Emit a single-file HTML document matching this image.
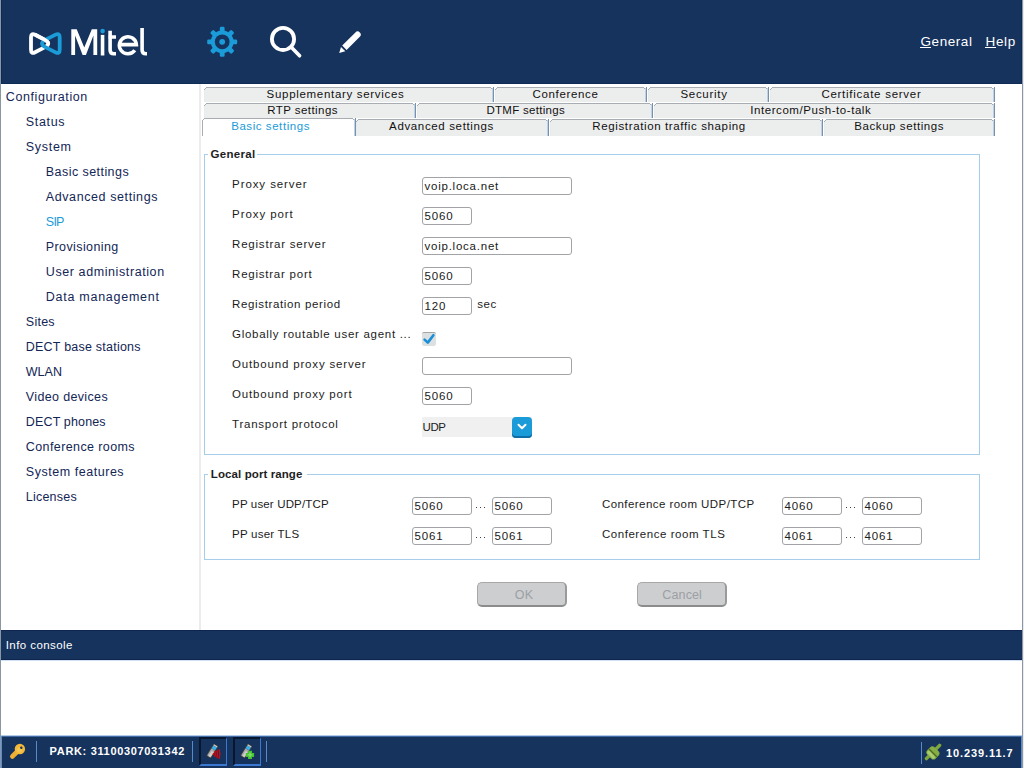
<!DOCTYPE html>
<html><head><meta charset="utf-8"><title>OMM</title>
<style>
html,body{margin:0;padding:0;}
body{width:1024px;height:768px;position:relative;overflow:hidden;background:#ffffff;font-family:"Liberation Sans",sans-serif;}
.r{position:absolute;}
.t{position:absolute;white-space:nowrap;line-height:normal;}
</style></head><body>
<div class="r" style="left:0px;top:0px;width:1px;height:768px;background:#8a96a2"></div>
<div class="r" style="left:1px;top:0px;width:1021px;height:84px;background:#16335d"></div>
<div class="r" style="left:1px;top:83px;width:1021px;height:1px;background:#0f2a55"></div>
<div class="r" style="left:1px;top:0px;width:1px;height:84px;background:#0c2a58"></div>
<div class="r" style="left:1021px;top:0px;width:1px;height:84px;background:#0c2a58"></div>
<div class="r" style="left:1022px;top:0px;width:1px;height:768px;background:#8a96a2"></div>
<div class="r" style="left:1023px;top:0px;width:1px;height:768px;background:#e8ecf0"></div>
<div class="r" style="left:199px;top:84px;width:2px;height:546px;background:#ececec"></div>
<svg class="r" style="left:0;top:0" width="400" height="84" viewBox="0 0 400 84">
<g fill="none" stroke-width="3.8" stroke-linejoin="round">
<path d="M31.00,37.20 Q31.00,32.60 35.08,34.72 L44.46,39.58 Q52.00,43.50 44.46,47.42 L35.08,52.28 Q31.00,54.40 31.00,49.80 Z" stroke="#ffffff"/>
<path d="M55.60,34.68 Q59.70,32.60 59.70,37.20 L59.70,49.80 Q59.70,54.40 55.60,52.32 L45.78,47.34 Q38.20,43.50 45.78,39.66 Z" stroke="#1b9bd8"/>
<clipPath id="wc"><rect x="36" y="30" width="16" height="12.4"/></clipPath>
<path d="M31.00,37.20 Q31.00,32.60 35.08,34.72 L44.46,39.58 Q52.00,43.50 44.46,47.42 L35.08,52.28 Q31.00,54.40 31.00,49.80 Z" stroke="#ffffff" clip-path="url(#wc)"/>
</g>
<path fill="#ffffff" d="M71.3,55.1 L71.3,29.3 L76.7,29.3 L84.25,47.6 L91.8,29.3 L97.2,29.3 L97.2,55.1 L93.4,55.1 L93.4,35.4 L85.9,55.1 L82.6,55.1 L75.1,35.4 L75.1,55.1 Z"/>
<g fill="none" stroke="#ffffff" stroke-width="3.6">
<path d="M102.55,34.9 L102.55,55.5"/>
<path d="M110.1,30.8 L110.1,50 Q110.1,53.7 113.8,53.7 L116,53.7 M108.2,37.05 L116,37.05"/>
<path d="M119.35,44.65 L136.35,44.65 A8.5,8.5 0 1 0 134.8,50.2"/>
<path d="M142.1,28 L142.1,50 Q142.1,53.8 145.9,53.8 L147,53.8"/>
</g>
<circle cx="102.6" cy="31.1" r="2.3" fill="#1b9bd8"/>
<!-- gear -->
<g transform="translate(222.2,41.8)" fill="#1b9bd8">
<circle r="11.4"/>
<rect x="-2.4" y="-15" width="4.8" height="6" rx="1.3" transform="rotate(0)"/><rect x="-2.4" y="-15" width="4.8" height="6" rx="1.3" transform="rotate(45)"/><rect x="-2.4" y="-15" width="4.8" height="6" rx="1.3" transform="rotate(90)"/><rect x="-2.4" y="-15" width="4.8" height="6" rx="1.3" transform="rotate(135)"/><rect x="-2.4" y="-15" width="4.8" height="6" rx="1.3" transform="rotate(180)"/><rect x="-2.4" y="-15" width="4.8" height="6" rx="1.3" transform="rotate(225)"/><rect x="-2.4" y="-15" width="4.8" height="6" rx="1.3" transform="rotate(270)"/><rect x="-2.4" y="-15" width="4.8" height="6" rx="1.3" transform="rotate(315)"/>
<circle r="7.4" fill="#16335d"/>
<circle r="2.9"/>
</g>
<!-- search -->
<circle cx="283" cy="38.9" r="11.1" fill="none" stroke="#fff" stroke-width="3.8"/>
<path d="M291.6,47.6 L299.6,55.8" stroke="#fff" stroke-width="3.6" stroke-linecap="round"/>
<!-- pencil -->
<path d="M342.2,45.6 L355.4,32.4 Q357.6,30.2 359.8,32.4 Q362,34.6 359.8,36.8 L346.6,50 Z" fill="#fff"/>
<path d="M341.0,46.9 L345.3,51.2 L339.2,53 Z" fill="#fff"/>
</svg>
<div class="t" style="left:920.50px;top:34px;font-size:13.5px;letter-spacing:0.565px;color:#ffffff;">General</div>
<div class="r" style="left:920px;top:47px;width:11px;height:1px;background:#ffffff"></div>
<div class="t" style="left:985.50px;top:34px;font-size:13.5px;letter-spacing:0.667px;color:#ffffff;">Help</div>
<div class="r" style="left:985px;top:47px;width:11px;height:1px;background:#ffffff"></div>
<div class="t" style="left:5.80px;top:90px;font-size:12.5px;letter-spacing:0.595px;color:#132656;">Configuration</div>
<div class="t" style="left:25.80px;top:115px;font-size:12.5px;letter-spacing:0.650px;color:#132656;">Status</div>
<div class="t" style="left:25.80px;top:140px;font-size:12.5px;letter-spacing:0.713px;color:#132656;">System</div>
<div class="t" style="left:45.80px;top:165px;font-size:12.5px;letter-spacing:0.442px;color:#132656;">Basic settings</div>
<div class="t" style="left:45.80px;top:190px;font-size:12.5px;letter-spacing:0.594px;color:#132656;">Advanced settings</div>
<div class="t" style="left:45.80px;top:215px;font-size:12.5px;letter-spacing:-0.742px;color:#1b9bd8;">SIP</div>
<div class="t" style="left:45.80px;top:240px;font-size:12.5px;letter-spacing:0.398px;color:#132656;">Provisioning</div>
<div class="t" style="left:45.80px;top:265px;font-size:12.5px;letter-spacing:0.591px;color:#132656;">User administration</div>
<div class="t" style="left:45.80px;top:290px;font-size:12.5px;letter-spacing:0.735px;color:#132656;">Data management</div>
<div class="t" style="left:25.80px;top:315px;font-size:12.5px;letter-spacing:0.250px;color:#132656;">Sites</div>
<div class="t" style="left:25.80px;top:340px;font-size:12.5px;letter-spacing:0.221px;color:#132656;">DECT base stations</div>
<div class="t" style="left:25.80px;top:365px;font-size:12.5px;letter-spacing:0.005px;color:#132656;">WLAN</div>
<div class="t" style="left:25.80px;top:390px;font-size:12.5px;letter-spacing:0.354px;color:#132656;">Video devices</div>
<div class="t" style="left:25.80px;top:415px;font-size:12.5px;letter-spacing:0.150px;color:#132656;">DECT phones</div>
<div class="t" style="left:25.80px;top:440px;font-size:12.5px;letter-spacing:0.400px;color:#132656;">Conference rooms</div>
<div class="t" style="left:25.80px;top:465px;font-size:12.5px;letter-spacing:0.536px;color:#132656;">System features</div>
<div class="t" style="left:25.80px;top:490px;font-size:12.5px;letter-spacing:0.214px;color:#132656;">Licenses</div>
<div class="r" style="left:205px;top:88px;width:287px;height:14px;background:#eceded"></div>
<div class="r" style="left:204px;top:90px;width:1px;height:12px;background:#e6ebee"></div>
<div class="r" style="left:206px;top:87px;width:285px;height:1px;background:#a7adb3"></div>
<div class="r" style="left:205px;top:88px;width:1px;height:1px;background:#a7adb3"></div>
<div class="r" style="left:204px;top:89px;width:1px;height:1px;background:#a7adb3"></div>
<div class="r" style="left:491px;top:88px;width:1px;height:1px;background:#a7adb3"></div>
<div class="r" style="left:493px;top:87px;width:1px;height:15px;background:#7a90a8"></div>
<div class="r" style="left:492px;top:88px;width:1px;height:14px;background:#bcd2ea"></div>
<div class="r" style="left:496px;top:88px;width:149px;height:14px;background:#eceded"></div>
<div class="r" style="left:495px;top:90px;width:1px;height:12px;background:#e6ebee"></div>
<div class="r" style="left:497px;top:87px;width:147px;height:1px;background:#a7adb3"></div>
<div class="r" style="left:496px;top:88px;width:1px;height:1px;background:#a7adb3"></div>
<div class="r" style="left:495px;top:89px;width:1px;height:1px;background:#a7adb3"></div>
<div class="r" style="left:644px;top:88px;width:1px;height:1px;background:#a7adb3"></div>
<div class="r" style="left:646px;top:87px;width:1px;height:15px;background:#7a90a8"></div>
<div class="r" style="left:645px;top:88px;width:1px;height:14px;background:#bcd2ea"></div>
<div class="r" style="left:649px;top:88px;width:118px;height:14px;background:#eceded"></div>
<div class="r" style="left:648px;top:90px;width:1px;height:12px;background:#e6ebee"></div>
<div class="r" style="left:650px;top:87px;width:116px;height:1px;background:#a7adb3"></div>
<div class="r" style="left:649px;top:88px;width:1px;height:1px;background:#a7adb3"></div>
<div class="r" style="left:648px;top:89px;width:1px;height:1px;background:#a7adb3"></div>
<div class="r" style="left:766px;top:88px;width:1px;height:1px;background:#a7adb3"></div>
<div class="r" style="left:768px;top:87px;width:1px;height:15px;background:#7a90a8"></div>
<div class="r" style="left:767px;top:88px;width:1px;height:14px;background:#bcd2ea"></div>
<div class="r" style="left:771px;top:88px;width:222px;height:14px;background:#eceded"></div>
<div class="r" style="left:770px;top:90px;width:1px;height:12px;background:#e6ebee"></div>
<div class="r" style="left:772px;top:87px;width:220px;height:1px;background:#a7adb3"></div>
<div class="r" style="left:771px;top:88px;width:1px;height:1px;background:#a7adb3"></div>
<div class="r" style="left:770px;top:89px;width:1px;height:1px;background:#a7adb3"></div>
<div class="r" style="left:992px;top:88px;width:1px;height:1px;background:#a7adb3"></div>
<div class="r" style="left:994px;top:87px;width:1px;height:15px;background:#7a90a8"></div>
<div class="r" style="left:993px;top:88px;width:1px;height:14px;background:#bcd2ea"></div>
<div class="r" style="left:205px;top:104px;width:209px;height:14px;background:#eceded"></div>
<div class="r" style="left:204px;top:106px;width:1px;height:12px;background:#e6ebee"></div>
<div class="r" style="left:206px;top:103px;width:207px;height:1px;background:#a7adb3"></div>
<div class="r" style="left:205px;top:104px;width:1px;height:1px;background:#a7adb3"></div>
<div class="r" style="left:204px;top:105px;width:1px;height:1px;background:#a7adb3"></div>
<div class="r" style="left:413px;top:104px;width:1px;height:1px;background:#a7adb3"></div>
<div class="r" style="left:415px;top:103px;width:1px;height:15px;background:#7a90a8"></div>
<div class="r" style="left:414px;top:104px;width:1px;height:14px;background:#bcd2ea"></div>
<div class="r" style="left:418px;top:104px;width:233px;height:14px;background:#eceded"></div>
<div class="r" style="left:417px;top:106px;width:1px;height:12px;background:#e6ebee"></div>
<div class="r" style="left:419px;top:103px;width:231px;height:1px;background:#a7adb3"></div>
<div class="r" style="left:418px;top:104px;width:1px;height:1px;background:#a7adb3"></div>
<div class="r" style="left:417px;top:105px;width:1px;height:1px;background:#a7adb3"></div>
<div class="r" style="left:650px;top:104px;width:1px;height:1px;background:#a7adb3"></div>
<div class="r" style="left:652px;top:103px;width:1px;height:15px;background:#7a90a8"></div>
<div class="r" style="left:651px;top:104px;width:1px;height:14px;background:#bcd2ea"></div>
<div class="r" style="left:655px;top:104px;width:338px;height:14px;background:#eceded"></div>
<div class="r" style="left:654px;top:106px;width:1px;height:12px;background:#e6ebee"></div>
<div class="r" style="left:656px;top:103px;width:336px;height:1px;background:#a7adb3"></div>
<div class="r" style="left:655px;top:104px;width:1px;height:1px;background:#a7adb3"></div>
<div class="r" style="left:654px;top:105px;width:1px;height:1px;background:#a7adb3"></div>
<div class="r" style="left:992px;top:104px;width:1px;height:1px;background:#a7adb3"></div>
<div class="r" style="left:994px;top:103px;width:1px;height:15px;background:#7a90a8"></div>
<div class="r" style="left:993px;top:104px;width:1px;height:14px;background:#bcd2ea"></div>
<div class="r" style="left:357px;top:120px;width:190px;height:16px;background:#eceded"></div>
<div class="r" style="left:356px;top:122px;width:1px;height:14px;background:#e6ebee"></div>
<div class="r" style="left:358px;top:119px;width:188px;height:1px;background:#a7adb3"></div>
<div class="r" style="left:357px;top:120px;width:1px;height:1px;background:#a7adb3"></div>
<div class="r" style="left:356px;top:121px;width:1px;height:1px;background:#a7adb3"></div>
<div class="r" style="left:546px;top:120px;width:1px;height:1px;background:#a7adb3"></div>
<div class="r" style="left:548px;top:119px;width:1px;height:17px;background:#7a90a8"></div>
<div class="r" style="left:547px;top:120px;width:1px;height:16px;background:#bcd2ea"></div>
<div class="r" style="left:551px;top:120px;width:270px;height:16px;background:#eceded"></div>
<div class="r" style="left:550px;top:122px;width:1px;height:14px;background:#e6ebee"></div>
<div class="r" style="left:552px;top:119px;width:268px;height:1px;background:#a7adb3"></div>
<div class="r" style="left:551px;top:120px;width:1px;height:1px;background:#a7adb3"></div>
<div class="r" style="left:550px;top:121px;width:1px;height:1px;background:#a7adb3"></div>
<div class="r" style="left:820px;top:120px;width:1px;height:1px;background:#a7adb3"></div>
<div class="r" style="left:822px;top:119px;width:1px;height:17px;background:#7a90a8"></div>
<div class="r" style="left:821px;top:120px;width:1px;height:16px;background:#bcd2ea"></div>
<div class="r" style="left:825px;top:120px;width:168px;height:16px;background:#eceded"></div>
<div class="r" style="left:824px;top:122px;width:1px;height:14px;background:#e6ebee"></div>
<div class="r" style="left:826px;top:119px;width:166px;height:1px;background:#a7adb3"></div>
<div class="r" style="left:825px;top:120px;width:1px;height:1px;background:#a7adb3"></div>
<div class="r" style="left:824px;top:121px;width:1px;height:1px;background:#a7adb3"></div>
<div class="r" style="left:992px;top:120px;width:1px;height:1px;background:#a7adb3"></div>
<div class="r" style="left:994px;top:119px;width:1px;height:17px;background:#7a90a8"></div>
<div class="r" style="left:993px;top:120px;width:1px;height:16px;background:#bcd2ea"></div>
<div class="r" style="left:203px;top:119px;width:151px;height:17px;background:#ffffff"></div>
<div class="r" style="left:202px;top:121px;width:1px;height:15px;background:#a7adb3"></div>
<div class="r" style="left:204px;top:118px;width:149px;height:1px;background:#a7adb3"></div>
<div class="r" style="left:203px;top:119px;width:1px;height:1px;background:#a7adb3"></div>
<div class="r" style="left:202px;top:120px;width:1px;height:1px;background:#a7adb3"></div>
<div class="r" style="left:353px;top:119px;width:1px;height:1px;background:#a7adb3"></div>
<div class="r" style="left:355px;top:118px;width:1px;height:18px;background:#7a90a8"></div>
<div class="r" style="left:354px;top:119px;width:1px;height:17px;background:#bcd2ea"></div>
<div class="t" style="left:266.60px;top:88px;font-size:11.5px;letter-spacing:0.691px;color:#111111;">Supplementary services</div>
<div class="t" style="left:532.60px;top:88px;font-size:11.5px;letter-spacing:0.637px;color:#111111;">Conference</div>
<div class="t" style="left:680.40px;top:88px;font-size:11.5px;letter-spacing:0.712px;color:#111111;">Security</div>
<div class="t" style="left:821.40px;top:88px;font-size:11.5px;letter-spacing:0.734px;color:#111111;">Certificate server</div>
<div class="t" style="left:267.30px;top:104px;font-size:11.5px;letter-spacing:0.433px;color:#111111;">RTP settings</div>
<div class="t" style="left:486.40px;top:104px;font-size:11.5px;letter-spacing:0.293px;color:#111111;">DTMF settings</div>
<div class="t" style="left:750.30px;top:104px;font-size:11.5px;letter-spacing:0.556px;color:#111111;">Intercom/Push-to-talk</div>
<div class="t" style="left:231.20px;top:120px;font-size:11.5px;letter-spacing:0.559px;color:#1b9bd8;">Basic settings</div>
<div class="t" style="left:389.10px;top:120px;font-size:11.5px;letter-spacing:0.642px;color:#111111;">Advanced settings</div>
<div class="t" style="left:592.30px;top:120px;font-size:11.5px;letter-spacing:0.630px;color:#111111;">Registration traffic shaping</div>
<div class="t" style="left:854.30px;top:120px;font-size:11.5px;letter-spacing:0.573px;color:#111111;">Backup settings</div>
<div class="r" style="left:204px;top:154px;width:1px;height:301px;background:#a6cde9"></div>
<div class="r" style="left:979px;top:154px;width:1px;height:301px;background:#a6cde9"></div>
<div class="r" style="left:204px;top:454px;width:776px;height:1px;background:#a6cde9"></div>
<div class="r" style="left:204px;top:154px;width:4px;height:1px;background:#a6cde9"></div>
<div class="r" style="left:257px;top:154px;width:723px;height:1px;background:#a6cde9"></div>
<div class="r" style="left:204px;top:474px;width:1px;height:86px;background:#a6cde9"></div>
<div class="r" style="left:979px;top:474px;width:1px;height:86px;background:#a6cde9"></div>
<div class="r" style="left:204px;top:559px;width:776px;height:1px;background:#a6cde9"></div>
<div class="r" style="left:204px;top:474px;width:4px;height:1px;background:#a6cde9"></div>
<div class="r" style="left:307px;top:474px;width:673px;height:1px;background:#a6cde9"></div>
<div class="t" style="left:210.50px;top:148px;font-size:11.5px;letter-spacing:0.292px;color:#1e1e1e;font-weight:bold;">General</div>
<div class="t" style="left:210.80px;top:468px;font-size:11.5px;letter-spacing:0.100px;color:#1e1e1e;font-weight:bold;">Local port range</div>
<div class="t" style="left:232.10px;top:178px;font-size:11.5px;letter-spacing:0.908px;color:#1c1c1c;">Proxy server</div>
<div class="t" style="left:232.10px;top:208px;font-size:11.5px;letter-spacing:0.910px;color:#1c1c1c;">Proxy port</div>
<div class="t" style="left:232.10px;top:238px;font-size:11.5px;letter-spacing:0.782px;color:#1c1c1c;">Registrar server</div>
<div class="t" style="left:232.10px;top:268px;font-size:11.5px;letter-spacing:0.764px;color:#1c1c1c;">Registrar port</div>
<div class="t" style="left:232.10px;top:298px;font-size:11.5px;letter-spacing:0.640px;color:#1c1c1c;">Registration period</div>
<div class="t" style="left:232.10px;top:328px;font-size:11.5px;letter-spacing:0.710px;color:#1c1c1c;">Globally routable user agent ...</div>
<div class="t" style="left:232.10px;top:358px;font-size:11.5px;letter-spacing:0.824px;color:#1c1c1c;">Outbound proxy server</div>
<div class="t" style="left:232.10px;top:388px;font-size:11.5px;letter-spacing:0.816px;color:#1c1c1c;">Outbound proxy port</div>
<div class="t" style="left:232.10px;top:418px;font-size:11.5px;letter-spacing:0.761px;color:#1c1c1c;">Transport protocol</div>
<div class="r" style="left:422px;top:177px;width:150px;height:18px;background:#fff;border:1px solid #a2a3a7;border-radius:3px;box-sizing:border-box"></div>
<div class="t" style="left:424.50px;top:180px;font-size:11.5px;letter-spacing:0.766px;color:#202020;">voip.loca.net</div>
<div class="r" style="left:422px;top:207px;width:50px;height:18px;background:#fff;border:1px solid #a2a3a7;border-radius:3px;box-sizing:border-box"></div>
<div class="t" style="left:424.50px;top:210px;font-size:11.5px;letter-spacing:0.833px;color:#202020;">5060</div>
<div class="r" style="left:422px;top:237px;width:150px;height:18px;background:#fff;border:1px solid #a2a3a7;border-radius:3px;box-sizing:border-box"></div>
<div class="t" style="left:424.50px;top:240px;font-size:11.5px;letter-spacing:0.766px;color:#202020;">voip.loca.net</div>
<div class="r" style="left:422px;top:267px;width:50px;height:18px;background:#fff;border:1px solid #a2a3a7;border-radius:3px;box-sizing:border-box"></div>
<div class="t" style="left:424.50px;top:270px;font-size:11.5px;letter-spacing:0.833px;color:#202020;">5060</div>
<div class="r" style="left:422px;top:297px;width:50px;height:18px;background:#fff;border:1px solid #a2a3a7;border-radius:3px;box-sizing:border-box"></div>
<div class="t" style="left:424.50px;top:300px;font-size:11.5px;letter-spacing:0.875px;color:#202020;">120</div>
<div class="t" style="left:477.30px;top:298px;font-size:11.5px;letter-spacing:0.477px;color:#1c1c1c;">sec</div>
<div class="r" style="left:422px;top:332px;width:14px;height:14px;background:#dde0e1;border-top:1px solid #a5a5a5;border-radius:2px;box-sizing:border-box"></div>
<svg class="r" style="left:416px;top:326px" width="26" height="26"><path d="M8.6,13.6 L11.8,16.6 L17.4,9.2" fill="none" stroke="#1a8fd6" stroke-width="2.6" stroke-linecap="round" stroke-linejoin="round"/></svg>
<div class="r" style="left:422px;top:357px;width:150px;height:18px;background:#fff;border:1px solid #a2a3a7;border-radius:3px;box-sizing:border-box"></div>
<div class="r" style="left:422px;top:387px;width:50px;height:18px;background:#fff;border:1px solid #a2a3a7;border-radius:3px;box-sizing:border-box"></div>
<div class="t" style="left:424.50px;top:390px;font-size:11.5px;letter-spacing:0.833px;color:#202020;">5060</div>
<div class="r" style="left:422px;top:417px;width:110px;height:20px;background:#f0f0f0"></div>
<div class="r" style="left:512px;top:417px;width:20px;height:21px;background:#1b9bd8;border-radius:4px;box-shadow:inset 0 -2px 0 #0f6da8"></div>
<svg class="r" style="left:512px;top:417px" width="20" height="21"><path d="M6.5,7.8 L10,11.3 L13.5,7.8" fill="none" stroke="#fff" stroke-width="2" stroke-linecap="round" stroke-linejoin="round"/></svg>
<div class="t" style="left:422.60px;top:421px;font-size:11.5px;letter-spacing:-0.445px;color:#202020;">UDP</div>
<div class="t" style="left:232.10px;top:498px;font-size:11.5px;letter-spacing:0.151px;color:#1c1c1c;">PP user UDP/TCP</div>
<div class="t" style="left:232.10px;top:528px;font-size:11.5px;letter-spacing:0.227px;color:#1c1c1c;">PP user TLS</div>
<div class="t" style="left:601.90px;top:498px;font-size:11.5px;letter-spacing:0.448px;color:#1c1c1c;">Conference room UDP/TCP</div>
<div class="t" style="left:601.90px;top:528px;font-size:11.5px;letter-spacing:0.556px;color:#1c1c1c;">Conference room TLS</div>
<div class="r" style="left:412px;top:497px;width:60px;height:18px;background:#fff;border:1px solid #a2a3a7;border-radius:3px;box-sizing:border-box"></div>
<div class="t" style="left:414.50px;top:500px;font-size:11.5px;letter-spacing:0.833px;color:#202020;">5060</div>
<div class="r" style="left:492px;top:497px;width:60px;height:18px;background:#fff;border:1px solid #a2a3a7;border-radius:3px;box-sizing:border-box"></div>
<div class="t" style="left:494.50px;top:500px;font-size:11.5px;letter-spacing:0.833px;color:#202020;">5060</div>
<div class="r" style="left:782px;top:497px;width:60px;height:18px;background:#fff;border:1px solid #a2a3a7;border-radius:3px;box-sizing:border-box"></div>
<div class="t" style="left:784.50px;top:500px;font-size:11.5px;letter-spacing:0.833px;color:#202020;">4060</div>
<div class="r" style="left:862px;top:497px;width:60px;height:18px;background:#fff;border:1px solid #a2a3a7;border-radius:3px;box-sizing:border-box"></div>
<div class="t" style="left:864.50px;top:500px;font-size:11.5px;letter-spacing:0.833px;color:#202020;">4060</div>
<div class="r" style="left:476px;top:507px;width:1px;height:1px;background:#404040"></div>
<div class="r" style="left:480px;top:507px;width:1px;height:1px;background:#404040"></div>
<div class="r" style="left:484px;top:507px;width:1px;height:1px;background:#404040"></div>
<div class="r" style="left:846px;top:507px;width:1px;height:1px;background:#404040"></div>
<div class="r" style="left:850px;top:507px;width:1px;height:1px;background:#404040"></div>
<div class="r" style="left:854px;top:507px;width:1px;height:1px;background:#404040"></div>
<div class="r" style="left:412px;top:527px;width:60px;height:18px;background:#fff;border:1px solid #a2a3a7;border-radius:3px;box-sizing:border-box"></div>
<div class="t" style="left:414.50px;top:530px;font-size:11.5px;letter-spacing:0.833px;color:#202020;">5061</div>
<div class="r" style="left:492px;top:527px;width:60px;height:18px;background:#fff;border:1px solid #a2a3a7;border-radius:3px;box-sizing:border-box"></div>
<div class="t" style="left:494.50px;top:530px;font-size:11.5px;letter-spacing:0.833px;color:#202020;">5061</div>
<div class="r" style="left:782px;top:527px;width:60px;height:18px;background:#fff;border:1px solid #a2a3a7;border-radius:3px;box-sizing:border-box"></div>
<div class="t" style="left:784.50px;top:530px;font-size:11.5px;letter-spacing:0.833px;color:#202020;">4061</div>
<div class="r" style="left:862px;top:527px;width:60px;height:18px;background:#fff;border:1px solid #a2a3a7;border-radius:3px;box-sizing:border-box"></div>
<div class="t" style="left:864.50px;top:530px;font-size:11.5px;letter-spacing:0.833px;color:#202020;">4061</div>
<div class="r" style="left:476px;top:537px;width:1px;height:1px;background:#404040"></div>
<div class="r" style="left:480px;top:537px;width:1px;height:1px;background:#404040"></div>
<div class="r" style="left:484px;top:537px;width:1px;height:1px;background:#404040"></div>
<div class="r" style="left:846px;top:537px;width:1px;height:1px;background:#404040"></div>
<div class="r" style="left:850px;top:537px;width:1px;height:1px;background:#404040"></div>
<div class="r" style="left:854px;top:537px;width:1px;height:1px;background:#404040"></div>
<div class="r" style="left:477px;top:582px;width:90px;height:25px;background:#cdcecf;border:1px solid #a8a8a8;border-bottom:2px solid #8c8c8c;border-right:2px solid #9a9a9a;border-radius:5px;box-sizing:border-box"></div>
<div class="r" style="left:637px;top:582px;width:90px;height:25px;background:#cdcecf;border:1px solid #a8a8a8;border-bottom:2px solid #8c8c8c;border-right:2px solid #9a9a9a;border-radius:5px;box-sizing:border-box"></div>
<div class="t" style="left:514.80px;top:588px;font-size:12.5px;letter-spacing:0.125px;color:#9ba0a6;">OK</div>
<div class="t" style="left:662.30px;top:588px;font-size:12.5px;letter-spacing:0.134px;color:#9ba0a6;">Cancel</div>
<div class="r" style="left:1px;top:630px;width:1021px;height:30px;background:#16335d"></div>
<div class="r" style="left:1px;top:630px;width:1021px;height:1px;background:#0f2550"></div>
<div class="r" style="left:1px;top:659px;width:1021px;height:1px;background:#0f2550"></div>
<div class="r" style="left:1px;top:660px;width:1021px;height:1px;background:#cfe0f2"></div>
<div class="t" style="left:5.70px;top:639px;font-size:11.5px;letter-spacing:0.436px;color:#ffffff;">Info console</div>
<div class="r" style="left:1px;top:735px;width:1021px;height:1px;background:#b5cce6"></div>
<div class="r" style="left:1px;top:736px;width:1021px;height:1px;background:#3f6aa5"></div>
<div class="r" style="left:1px;top:737px;width:1020px;height:31px;background:#16335d"></div>
<div class="r" style="left:1px;top:736px;width:1px;height:32px;background:#5d8ccc"></div>
<div class="r" style="left:1021px;top:736px;width:1px;height:32px;background:#5d8ccc"></div>
<div class="r" style="left:36px;top:741px;width:1px;height:21px;background:#5a8ac6"></div>
<div class="r" style="left:192px;top:741px;width:1px;height:21px;background:#5a8ac6"></div>
<div class="r" style="left:266px;top:741px;width:1px;height:21px;background:#5a8ac6"></div>
<div class="r" style="left:921px;top:742px;width:1px;height:22px;background:#5a8ac6"></div>
<div class="r" style="left:199px;top:737px;width:28px;height:29px;background:#16335d;border-top:2px solid #08162e;border-left:2px solid #08162e;border-bottom:2px solid #3b78cf;border-right:1px solid #3b78cf;box-sizing:border-box"></div>
<div class="r" style="left:233px;top:737px;width:28px;height:29px;background:#16335d;border-top:2px solid #08162e;border-left:2px solid #08162e;border-bottom:2px solid #3b78cf;border-right:1px solid #3b78cf;box-sizing:border-box"></div>
<div class="t" style="left:49.60px;top:745px;font-size:11px;letter-spacing:0.663px;color:#ffffff;font-weight:bold;">PARK: 31100307031342</div>
<div class="t" style="left:946.00px;top:747px;font-size:11px;letter-spacing:0.900px;color:#ffffff;font-weight:bold;">10.239.11.7</div>
<svg class="r" style="left:0;top:736px" width="1024" height="32" viewBox="0 736 1024 32">
<!-- key -->
<path d="M17.6,751.2 L12.4,756.4" stroke="#eeb032" stroke-width="4.8" stroke-linecap="round"/>
<circle cx="19.9" cy="749" r="5.2" fill="#f3b83a"/>
<circle cx="19.4" cy="750" r="2.6" fill="#f7d060" opacity="0.6"/>
<circle cx="21.3" cy="747.7" r="1.2" fill="#16335d"/>
<g transform="translate(212.3,751) rotate(-58)">
<rect x="-7.3" y="-2.9" width="14.6" height="5.8" rx="1.4" fill="#3c3c3c"/>
<rect x="-6.5" y="-2.1" width="8.4" height="4.2" rx="0.6" fill="#a9a9a9"/>
<rect x="-6.3" y="-0.6" width="6" height="2.4" fill="#cfcfcf"/>
<rect x="1.9" y="-2.0" width="3.6" height="4.0" fill="#3aaee6"/>
<rect x="5.5" y="-2.1" width="1.1" height="4.2" fill="#d0d0d0"/>
</g>
<path d="M213.4,753.2 L213.4,755" stroke="#e00000" stroke-width="1.2"/>
<path d="M214.7,751 Q215.9,754 214.7,757 M216.9,750.3 Q218.2,754.2 216.9,758 M219.1,749.4 Q220.6,754 219.1,758.8" fill="none" stroke="#ee0000" stroke-width="1.25"/>
<g transform="translate(246.3,751) rotate(-58)">
<rect x="-7.3" y="-2.9" width="14.6" height="5.8" rx="1.4" fill="#3c3c3c"/>
<rect x="-6.5" y="-2.1" width="8.4" height="4.2" rx="0.6" fill="#a9a9a9"/>
<rect x="-6.3" y="-0.6" width="6" height="2.4" fill="#cfcfcf"/>
<rect x="1.9" y="-2.0" width="3.6" height="4.0" fill="#3aaee6"/>
<rect x="5.5" y="-2.1" width="1.1" height="4.2" fill="#d0d0d0"/>
</g>
<path d="M250,750.8 L250,758.9 M245.8,754.9 L254.1,754.9" stroke="#44c234" stroke-width="4"/>
<path d="M250,752.5 L250,757.3 M247.5,754.9 L252.5,754.9" stroke="#7ee06a" stroke-width="1.4"/>
<!-- plug -->
<path d="M926.4,758.6 L939.6,745.4" stroke="#7ea83a" stroke-width="3.4" stroke-linecap="round"/>
<g transform="translate(932.9,752.9) rotate(-45)">
<rect x="-5.2" y="-6.0" width="10.4" height="12" rx="3.4" fill="#86ad45"/>
<rect x="-4.2" y="-4.8" width="3.2" height="9.6" rx="1.5" fill="#a9cc70"/>
<rect x="-0.6" y="-5.8" width="1.2" height="11.6" fill="#4a6a1c"/>
</g>
</svg>
</body></html>
